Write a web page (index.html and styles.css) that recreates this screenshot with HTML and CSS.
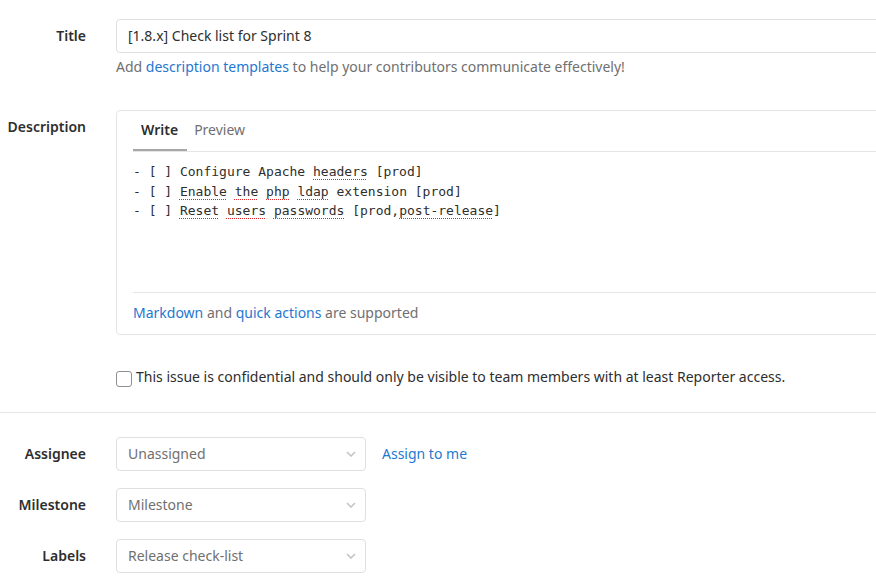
FILE: index.html
```html
<!DOCTYPE html>
<html lang="en">
<head>
<meta charset="utf-8">
<title>New issue</title>
<link rel="stylesheet" href="styles.css">
</head>
<body>
<form class="issue-form">
  <div class="form-row row-title">
    <label class="form-label">Title</label>
    <div class="form-field wide">
      <div class="text-input">[1.8.x] Check list for Sprint 8</div>
      <p class="help-text">Add <a class="link" href="#">description templates</a> to help your contributors communicate effectively!</p>
    </div>
  </div>

  <div class="form-row row-description">
    <label class="form-label">Description</label>
    <div class="form-field wide">
      <div class="md-area">
        <div class="md-tabs">
          <span class="md-tab active">Write</span>
          <span class="md-tab">Preview</span>
        </div>
        <div class="md-editor"><div>- [ ] Configure Apache <span class="sp">headers</span> [prod]</div><div>- [ ] <span class="sp">Enable</span> <span class="sp">the</span> <span class="sp">php</span> <span class="sp">ldap</span> extension [prod]</div><div>- [ ] <span class="sp">Reset</span> <span class="sp">users</span> <span class="sp">passwords</span> [prod,<span class="sp">post-release</span>]</div></div>
        <div class="md-footer"><a class="link" href="#">Markdown</a> and <a class="link" href="#">quick actions</a> are supported</div>
      </div>
    </div>
  </div>

  <div class="form-row row-confidential">
    <span class="form-label"></span>
    <label class="check-label"><span class="checkbox"></span>This issue is confidential and should only be visible to team members with at least Reporter access.</label>
  </div>

  <hr class="separator">

  <div class="form-row row-select">
    <label class="form-label">Assignee</label>
    <div class="select-wrap">
      <div class="select"><span>Unassigned</span><svg class="chev" width="10" height="6" viewBox="0 0 10 6"><path d="M1 1l4 4 4-4" fill="none" stroke="#c4c4c4" stroke-width="1.6"/></svg></div>
      <a class="link assign-me" href="#">Assign to me</a>
    </div>
  </div>
  <div class="form-row row-select">
    <label class="form-label">Milestone</label>
    <div class="select-wrap">
      <div class="select"><span>Milestone</span><svg class="chev" width="10" height="6" viewBox="0 0 10 6"><path d="M1 1l4 4 4-4" fill="none" stroke="#c4c4c4" stroke-width="1.6"/></svg></div>
    </div>
  </div>
  <div class="form-row row-select">
    <label class="form-label">Labels</label>
    <div class="select-wrap">
      <div class="select"><span>Release check-list</span><svg class="chev" width="10" height="6" viewBox="0 0 10 6"><path d="M1 1l4 4 4-4" fill="none" stroke="#c4c4c4" stroke-width="1.6"/></svg></div>
    </div>
  </div>
</form>
</body>
</html>
```
FILE: styles.css
```css
html, body {
  margin: 0;
  padding: 0;
  overflow: hidden;
  background: #fff;
}
body {
  font-family: "Noto Sans", "Open Sans", sans-serif;
  font-size: 14px;
  line-height: 20px;
  color: #2e2e2e;
}
.issue-form {
  padding-top: 19px;
}
.form-row {
  display: flex;
  align-items: flex-start;
  gap: 30px;
}
.form-label {
  flex: 0 0 86px;
  text-align: right;
  font-weight: 600;
  padding-top: 7px;
}
.form-field {
  flex: 1;
  min-width: 0;
}
.form-field.wide {
  margin-right: -40px;
}
.text-input {
  height: 34px;
  box-sizing: border-box;
  border: 1px solid #dfdfdf;
  border-radius: 4px;
  padding: 6px 11px;
}
.help-text {
  margin: 4px 0 0;
  color: #707070;
}
.link {
  color: #1f78d1;
  text-decoration: none;
}
.row-description {
  margin-top: 33px;
}
.md-area {
  border: 1px solid #e5e5e5;
  border-radius: 4px;
  padding: 0 0 0 16px;
}
.md-tabs {
  display: flex;
  border-bottom: 1px solid #e5e5e5;
  height: 40px;
}
.md-tab {
  padding: 9px 8px 0;
  color: #707070;
  height: 29px;
}
.md-tab.active {
  color: #2e2e2e;
  font-weight: 600;
  border-bottom: 2px solid #a7a7a7;
  padding-right: 9px;
  margin-right: -1px;
}
.md-tab + .md-tab {
  padding-left: 8px;
}
.md-editor {
  font-family: "DejaVu Sans Mono", monospace;
  font-size: 13px;
  line-height: 19.5px;
  color: #2e2e2e;
  padding-top: 10px;
  height: 130px;
  border-bottom: 1px solid #e5e5e5;
  white-space: pre;
}
.sp {
  text-decoration: underline dotted #e0262a;
  text-decoration-thickness: 1px;
  text-underline-offset: 3px;
}
.md-footer {
  color: #707070;
  padding: 10px 0 11px;
}
.row-confidential {
  margin-top: 32px;
}
.check-label {
  display: flex;
  align-items: flex-start;
  padding-top: 0;
}
.checkbox {
  flex: 0 0 auto;
  width: 14px;
  height: 14px;
  border: 1px solid #8f8f8f;
  border-radius: 3px;
  margin: 4px 4px 0 0;
}
.separator {
  border: 0;
  border-top: 1px solid #e5e5e5;
  margin: 25px 0 24px;
}
.row-select + .row-select {
  margin-top: 17px;
}
.select-wrap {
  display: flex;
  align-items: center;
  gap: 16px;
}
.select {
  width: 250px;
  height: 34px;
  box-sizing: border-box;
  border: 1px solid #dfdfdf;
  border-radius: 4px;
  padding: 0 9px 0 11px;
  display: flex;
  align-items: center;
  justify-content: space-between;
  color: #707070;
}
.chev {
  display: block;
}
```
